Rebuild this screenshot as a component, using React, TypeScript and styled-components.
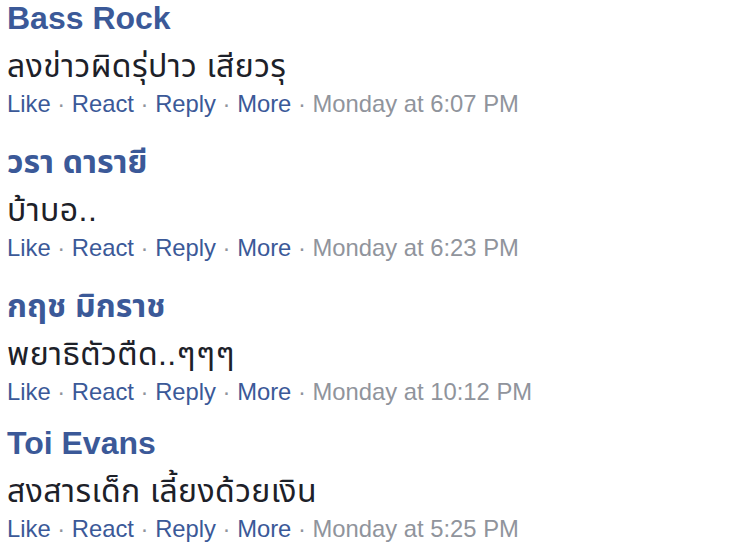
import React from "react";
import styled, { createGlobalStyle } from "styled-components";

const GlobalStyle = createGlobalStyle`
  html, body {
    margin: 0;
    padding: 0;
    background: #ffffff;
  }
  body {
    font-family: "Liberation Sans", Arial, "Noto Sans Thai", "Noto Sans", sans-serif;
    -webkit-font-smoothing: antialiased;
  }
`;

const List = styled.div`
  display: flex;
  flex-direction: column;
  gap: 17px;
  padding: 0 0 0 7px;
`;

const Comment = styled.div`
  display: flex;
  flex-direction: column;
`;

const Name = styled.div<{ $thai?: boolean }>`
  padding-top: ${(p) => (p.$thai ? "7px" : "0")};
  font-family: "Liberation Sans", Arial, "Noto Sans Thai", sans-serif;
  font-weight: 700;
  font-size: 32px;
  line-height: 36px;
  color: #3b5998;
`;

const Body = styled.div`
  margin-top: 8px;
  font-family: "Liberation Sans", Arial, "Noto Sans Thai", sans-serif;
  font-size: 32px;
  line-height: 44px;
  letter-spacing: 0.4px;
  color: #1d2129;
  white-space: nowrap;
`;

const Actions = styled.div`
  font-family: "Liberation Sans", Arial, sans-serif;
  font-size: 23.8px;
  line-height: 32px;
  color: #90949c;
  white-space: nowrap;
`;

const Link = styled.span`
  color: #3b5998;
`;

const Dot = styled.span`
  color: #90949c;
`;

type Item = { name: string; text: string; time: string };

const items: Item[] = [
  { name: "Bass Rock", text: "ลงข่าวผิดรุ่ปาว เสียวรุ", time: "Monday at 6:07 PM" },
  { name: "วรา ดารายี", text: "บ้าบอ..", time: "Monday at 6:23 PM" },
  { name: "กฤช มิกราช", text: "พยาธิตัวตืด..ๆๆๆ", time: "Monday at 10:12 PM" },
  { name: "Toi Evans", text: "สงสารเด็ก เลี้ยงด้วยเงิน", time: "Monday at 5:25 PM" },
];

const links = ["Like", "React", "Reply", "More"];
const isThai = (s: string) => /[\u0E00-\u0E7F]/.test(s);

export default function App() {
  return (
    <>
      <GlobalStyle />
      <List>
        {items.map((it) => (
          <Comment key={it.name}>
            <Name $thai={isThai(it.name)}>{it.name}</Name>
            <Body>{it.text}</Body>
            <Actions>
              {links.map((l) => (
                <React.Fragment key={l}>
                  <Link>{l}</Link>
                  <Dot> · </Dot>
                </React.Fragment>
              ))}
              {it.time}
            </Actions>
          </Comment>
        ))}
      </List>
    </>
  );
}
